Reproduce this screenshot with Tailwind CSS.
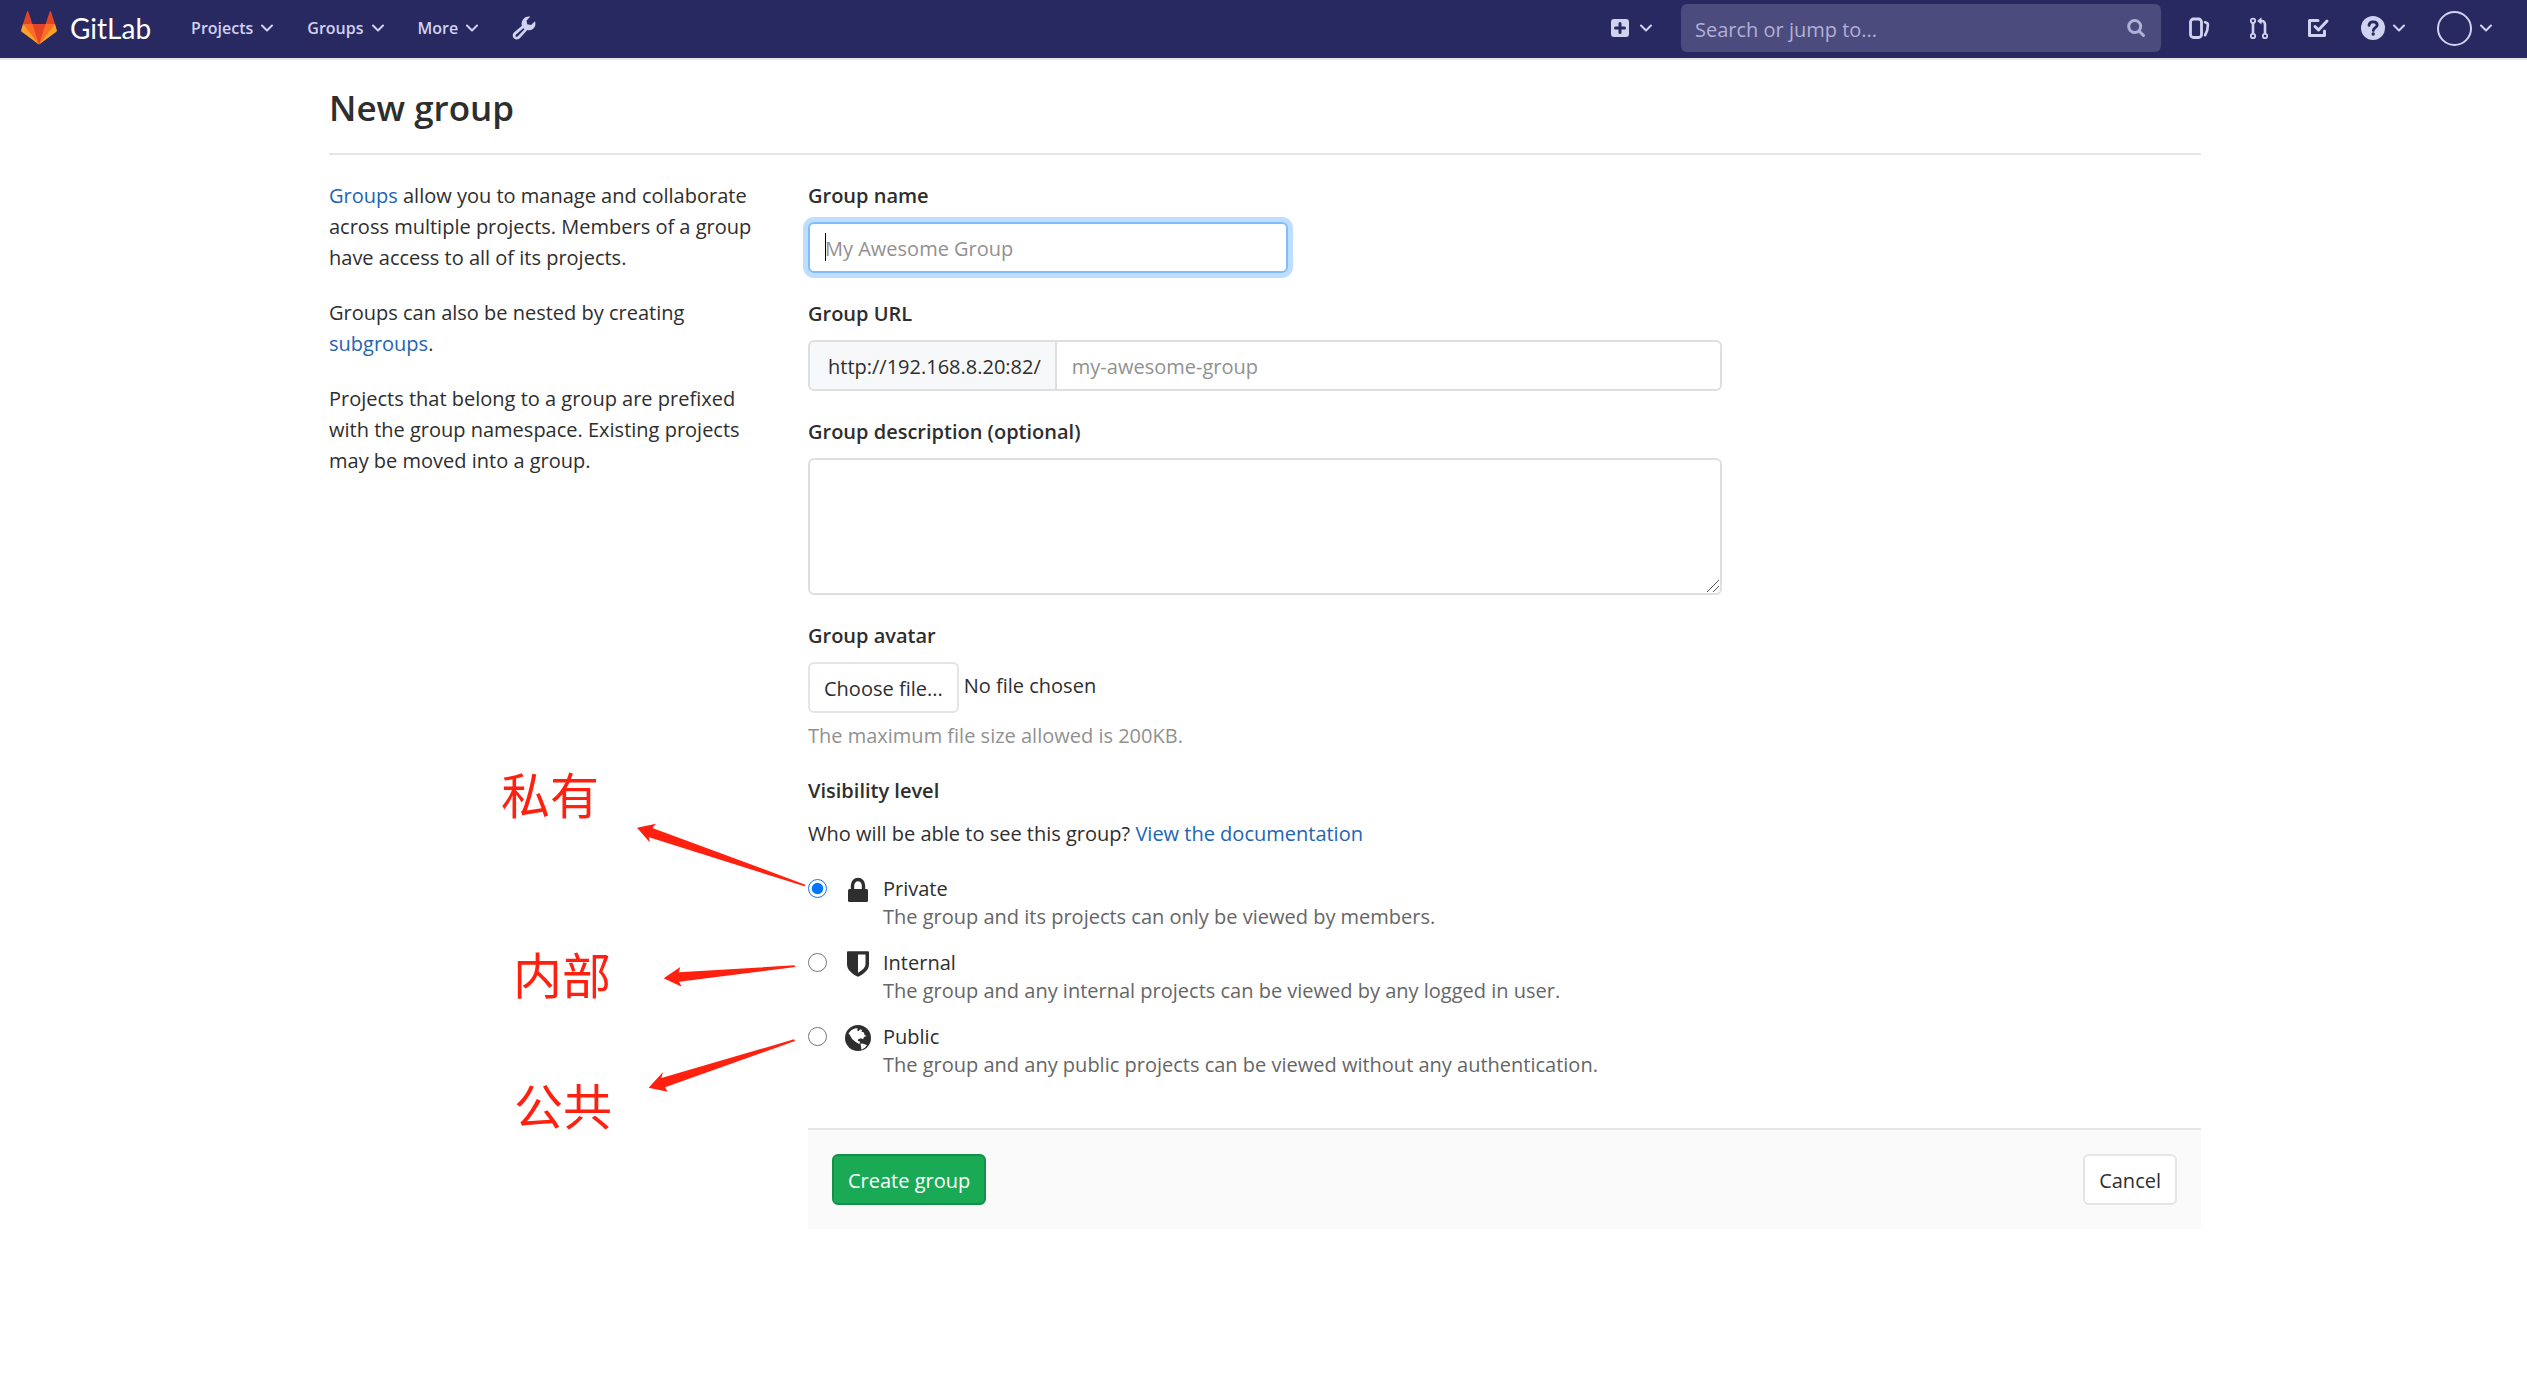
<!DOCTYPE html>
<html lang="en">
<head>
<meta charset="utf-8">
<title>New group · GitLab</title>
<script src="https://cdn.jsdelivr.net/npm/@tailwindcss/browser@4"></script>
</head>
<body class="bg-white font-['Open_Sans',sans-serif] text-[20px] leading-[31px] text-[#2e2e2e]">

<header class="flex h-[60px] items-center justify-between border-b-2 border-[#e5e5e5] bg-[#292961] pb-0.5 pl-[21px] pr-[35px] text-[16px] font-semibold text-[#d1d1f0]">
  <div class="flex items-center">
    <a href="#" class="flex items-center gap-[13px]">
      <svg class="size-9" viewBox="0 0 36 36" aria-hidden="true">
        <path fill="#e24329" d="M2 14l9.38 9v-9l-4-12.28c-.205-.632-1.176-.632-1.38 0z"/>
        <path fill="#e24329" d="M34 14l-9.38 9v-9l4-12.28c.205-.632 1.176-.632 1.38 0z"/>
        <path fill="#e24329" d="M18 34.38L3 14h30z"/>
        <path fill="#fc6d26" d="M18 34.38L11.38 14H2l4 11z"/>
        <path fill="#fc6d26" d="M18 34.38L24.62 14H34l-4 11z"/>
        <path fill="#fca326" d="M2 14L.1 20.16c-.18.565 0 1.2.5 1.56l17.42 12.66z"/>
        <path fill="#fca326" d="M34 14l1.9 6.16c.18.565 0 1.2-.5 1.56L18 34.38z"/>
      </svg>
      <span class="font-['Lato',sans-serif] text-[28px] font-normal text-white">GitLab</span>
    </a>
    <nav class="ml-10 flex items-center gap-[34px]">
      <button class="flex items-center gap-2">Projects
        <svg class="h-2 w-3" viewBox="0 0 12 8" fill="none" stroke="currentColor" stroke-width="2" stroke-linecap="round" stroke-linejoin="round"><path d="M1 1.5l5 5 5-5"/></svg>
      </button>
      <button class="flex items-center gap-2">Groups
        <svg class="h-2 w-3" viewBox="0 0 12 8" fill="none" stroke="currentColor" stroke-width="2" stroke-linecap="round" stroke-linejoin="round"><path d="M1 1.5l5 5 5-5"/></svg>
      </button>
      <button class="flex items-center gap-2">More
        <svg class="h-2 w-3" viewBox="0 0 12 8" fill="none" stroke="currentColor" stroke-width="2" stroke-linecap="round" stroke-linejoin="round"><path d="M1 1.5l5 5 5-5"/></svg>
      </button>
      <a href="#" aria-label="Admin Area">
        <svg class="size-6" viewBox="0 0 24 24" aria-hidden="true">
          <path fill="currentColor" fill-rule="evenodd" d="M18.2.7L14.6 4.4l.5 3.9 4 .6 3.8-3.7c1.2 3.200.2 6-2 7.700-1.700 1.300-3.700 1.600-5.600 1L8.300 21.800c-1.500 1.800-4.300 2.300-6.200.8-2-1.700-1.800-4.600.1-6.300l7.700-6.600c-.7-2.400-.1-4.900 1.700-6.900C13.400.8 15.900.1 18.200.7zM11.300 12.200l-7.200 6.300c-.7.7-.8 1.500-.3 2 .5.600 1.500.5 2-.2l6.700-7.100z"/>
        </svg>
      </a>
    </nav>
  </div>

  <div class="flex items-center">
    <button class="flex items-center gap-2" aria-label="New">
      <svg class="size-6" viewBox="0 0 24 24"><rect x="3" y="3" width="18" height="18" rx="3" fill="currentColor"/><path d="M12 7.500v9M7.500 12h9" stroke="#292961" stroke-width="3" stroke-linecap="round"/></svg>
      <svg class="h-2 w-3" viewBox="0 0 12 8" fill="none" stroke="currentColor" stroke-width="2" stroke-linecap="round" stroke-linejoin="round"><path d="M1 1.5l5 5 5-5"/></svg>
    </button>
    <label class="ml-[29px] flex h-12 w-[480px] items-center rounded-md bg-[#4c4b7d] pl-[14px] pr-[13px]">
      <input type="text" aria-label="Search or jump to" placeholder="Search or jump to..." class="min-w-0 flex-1 bg-transparent pt-0.5 text-[20px] font-normal outline-none placeholder:text-[#b1b0d6]">
      <svg class="size-6 text-[#b1b0d6]" viewBox="0 0 24 24" fill="none" stroke="currentColor" stroke-width="3" stroke-linecap="round"><circle cx="10.700" cy="10.500" r="6"/><path d="M15.500 15.500l4 4"/></svg>
    </label>
    <a href="#" aria-label="Issues" class="ml-[26px]">
      <svg class="size-6" viewBox="0 0 24 24" fill="none" stroke="currentColor" stroke-linecap="round"><rect x="3.500" y="3" width="11" height="18.500" rx="3" stroke-width="2.800"/><path d="M18 6.200c2 .3 2.900 1.200 2.900 2.800 0 3.800-.8 7-2.800 10.200" stroke-width="2.600"/></svg>
    </a>
    <a href="#" aria-label="Merge requests" class="ml-9">
      <svg class="size-6" viewBox="0 0 24 24" fill="none" stroke="currentColor"><g stroke-width="1.800"><circle cx="6" cy="4.800" r="2.200"/><circle cx="6" cy="20" r="2.200"/><circle cx="18" cy="20" r="2.200"/></g><path d="M6 7v11M18 18V8.500c0-2-1.200-3.500-3-3.500h-2" stroke-width="2.600"/><path d="M14.500 1.300v7.200L10.200 4.900z" fill="currentColor" stroke="none"/></svg>
    </a>
    <a href="#" aria-label="To-Do List" class="ml-[35px]">
      <svg class="size-6" viewBox="0 0 24 24" fill="none" stroke="currentColor" stroke-width="3" stroke-linecap="round" stroke-linejoin="round"><path d="M12 4.500H3.500v15h15V15"/><path d="M9 10.500l3.500 3.500L21 5"/></svg>
    </a>
    <button class="ml-[31px] flex items-center gap-2" aria-label="Help">
      <svg class="size-6" viewBox="0 0 24 24"><circle cx="12" cy="12" r="12" fill="currentColor"/><path d="M8 9.300c.2-2.300 1.900-3.500 4.100-3.500 2.400 0 4.100 1.300 4.100 3.200 0 2.700-3.900 2.700-3.900 5.500" fill="none" stroke="#292961" stroke-width="2.800" stroke-linecap="round"/><circle cx="12.200" cy="18" r="1.700" fill="#292961"/></svg>
      <svg class="h-2 w-3" viewBox="0 0 12 8" fill="none" stroke="currentColor" stroke-width="2" stroke-linecap="round" stroke-linejoin="round"><path d="M1 1.5l5 5 5-5"/></svg>
    </button>
    <button class="ml-8 flex items-center gap-2" aria-label="Account">
      <span class="size-[35px] rounded-full border-2 border-[#d1d1f0]"></span>
      <svg class="h-2 w-3" viewBox="0 0 12 8" fill="none" stroke="currentColor" stroke-width="2" stroke-linecap="round" stroke-linejoin="round"><path d="M1 1.5l5 5 5-5"/></svg>
    </button>
  </div>
</header>

<main class="pl-[3px]">
  <div class="relative mx-auto max-w-[1872px] pt-6">
    <h1 class="border-b-2 border-[#e5e5e5] pb-[21px] text-[35px] leading-[48px] font-semibold">New group</h1>

    <div class="flex pt-[25px]">
      <aside class="flex w-[479px] shrink-0 flex-col gap-6 pr-12">
        <p><a href="#" class="text-[#2264b6]">Groups</a> allow you to manage and collaborate across multiple projects. Members of a group have access to all of its projects.</p>
        <p>Groups can also be nested by creating <a href="#" class="text-[#2264b6]">subgroups</a>.</p>
        <p>Projects that belong to a group are prefixed with the group namespace. Existing projects may be moved into a group.</p>
      </aside>

      <form class="min-w-0 flex-1">
        <div class="flex max-w-[914px] flex-col gap-[25px]">
          <div>
            <label for="name" class="mb-[11px] block font-semibold">Group name</label>
            <div class="relative w-[480px]">
              <input id="name" type="text" placeholder="My Awesome Group" class="block h-[51px] w-full rounded-md border-2 border-[#80bdff] bg-white px-[15px] pt-0.5 ring-[5px] ring-[#bfdeff] outline-none placeholder:text-[#919191]">
              <span class="absolute top-[11px] left-[17px] h-7 w-px bg-black"></span>
            </div>
          </div>

          <div>
            <label for="url" class="mb-[11px] block font-semibold">Group URL</label>
            <div class="flex h-[51px]">
              <span class="flex items-center rounded-l-md border-2 border-[#dfdfdf] bg-[#f7f8fa] pt-0.5 pr-[14px] pl-[18px]">http://192.168.8.20:82/</span>
              <input id="url" type="text" placeholder="my-awesome-group" class="min-w-0 flex-1 rounded-r-md border-2 border-l-0 border-[#dfdfdf] bg-white px-[15px] pt-0.5 outline-none placeholder:text-[#919191]">
            </div>
          </div>

          <div>
            <label for="description" class="mb-[11px] block font-semibold">Group description (optional)</label>
            <div class="relative">
              <textarea id="description" class="block h-[137px] w-full resize-none rounded-md border-2 border-[#dfdfdf] bg-white px-[15px] py-2 outline-none"></textarea>
              <svg class="pointer-events-none absolute right-[3px] bottom-[3px] size-3" viewBox="0 0 12 12" fill="none" stroke="#555" stroke-width="1"><path d="M0 12L12 0M6 12l6-6"/></svg>
            </div>
          </div>

          <div>
            <label for="avatar" class="mb-[11px] block font-semibold">Group avatar</label>
            <div class="flex items-start gap-[5px]">
              <button type="button" class="h-[51px] rounded-md border-2 border-[#e5e5e5] bg-white px-[14px] pt-0.5">Choose file...</button>
              <span class="mt-2">No file chosen</span>
              <input id="avatar" type="file" class="hidden">
            </div>
            <p class="mt-[7px] text-[#919191]">The maximum file size allowed is 200KB.</p>
          </div>
        </div>

        <fieldset class="mt-6">
          <legend class="mb-3 font-semibold">Visibility level</legend>
          <p>Who will be able to see this group? <a href="#" class="text-[#2264b6]">View the documentation</a></p>

          <div class="mt-[26px] flex flex-col gap-[18px] leading-7">
            <div class="flex items-start">
              <input id="private" type="radio" name="visibility" checked class="mt-1 size-[19px] shrink-0">
              <label for="private" class="ml-[18px] flex gap-3">
                <svg class="mt-0.5 size-[26px] shrink-0" viewBox="0 0 26 26" aria-hidden="true"><path d="M7.500 13V8.500a5.500 6 0 0 1 11 0V13" fill="none" stroke="#2e2e2e" stroke-width="3.400"/><rect x="3" y="12" width="20" height="13" rx="1.500" fill="#2e2e2e"/></svg>
                <span>Private<span class="block text-[#666]">The group and its projects can only be viewed by members.</span></span>
              </label>
            </div>
            <div class="flex items-start">
              <input id="internal" type="radio" name="visibility" class="mt-1 size-[19px] shrink-0">
              <label for="internal" class="ml-[18px] flex gap-3">
                <svg class="mt-0.5 size-[26px] shrink-0" viewBox="0 0 26 26" aria-hidden="true"><path fill="#2e2e2e" fill-rule="evenodd" d="M3 .3h20a1 1 0 0 1 1 1V13c0 6-5 10-11 12.800C7 23 2 19 2 13V1.300a1 1 0 0 1 1-1zM13 3.500v18.200c4.500-2.500 7.500-5.200 7.500-9V3.500z"/></svg>
                <span>Internal<span class="block text-[#666]">The group and any internal projects can be viewed by any logged in user.</span></span>
              </label>
            </div>
            <div class="flex items-start">
              <input id="public" type="radio" name="visibility" class="mt-1 size-[19px] shrink-0">
              <label for="public" class="ml-[18px] flex gap-3">
                <svg class="mt-0.5 size-[26px] shrink-0" viewBox="0 0 26 26" aria-hidden="true"><circle cx="13" cy="13" r="13" fill="#2e2e2e"/><path fill="#fff" d="M3.500 8.200L6.500 5l4-1.800 2.500.2-1 1.800 1.500 1L15 4.500l2 .3-.5 2 2.500.7.500 2.500 2 1-2.500 1-1 2.200-2-1-2.500.8-.8 2 2 .3.300 2.200-1.500.200-3.500-2.200-3-2.800-2-3.500z"/><path fill="#fff" d="M15.500 18.500l3 .2 3.500 1.500-2 2.300-3.500 2.200-.5-3z"/></svg>
                <span>Public<span class="block text-[#666]">The group and any public projects can be viewed without any authentication.</span></span>
              </label>
            </div>
          </div>
        </fieldset>

        <div class="mt-[49px] flex justify-between border-t-2 border-[#e5e5e5] bg-[#fafafa] px-6 py-6">
          <button type="submit" class="h-[51px] rounded-md border-2 border-[#168f48] bg-[#1aaa55] px-[14px] pt-0.5 text-white">Create group</button>
          <button type="button" class="h-[51px] rounded-md border-2 border-[#e5e5e5] bg-white px-[14px] pt-0.5">Cancel</button>
        </div>
      </form>
    </div>

    <!-- Annotations over the visibility options -->
    <div class="pointer-events-none font-['Noto_Sans_CJK_SC',sans-serif] text-[49px] leading-[48px] text-[#ff2010]" lang="zh-CN">
      <span class="absolute top-[709px] left-[172px]">私有</span>
      <span class="absolute top-[889px] left-[184px]">内部</span>
      <span class="absolute top-[1020px] left-[185px]">公共</span>
      <svg class="absolute top-[750px] left-[291px] h-[300px] w-[200px]" viewBox="420 180 600 900" fill="currentColor" aria-hidden="true">
        <path d="M471 233L528 221L517 234L976 404L974 409L507 262L509 277Z"/>
        <path d="M551 685L601 651L596 667L943 646L946 651L597 695L605 710Z"/>
        <path d="M506 1013L549 966L544 984L942 868L945 873L555 1012L563 1025Z"/>
      </svg>
    </div>
  </div>
</main>
</body>
</html>
